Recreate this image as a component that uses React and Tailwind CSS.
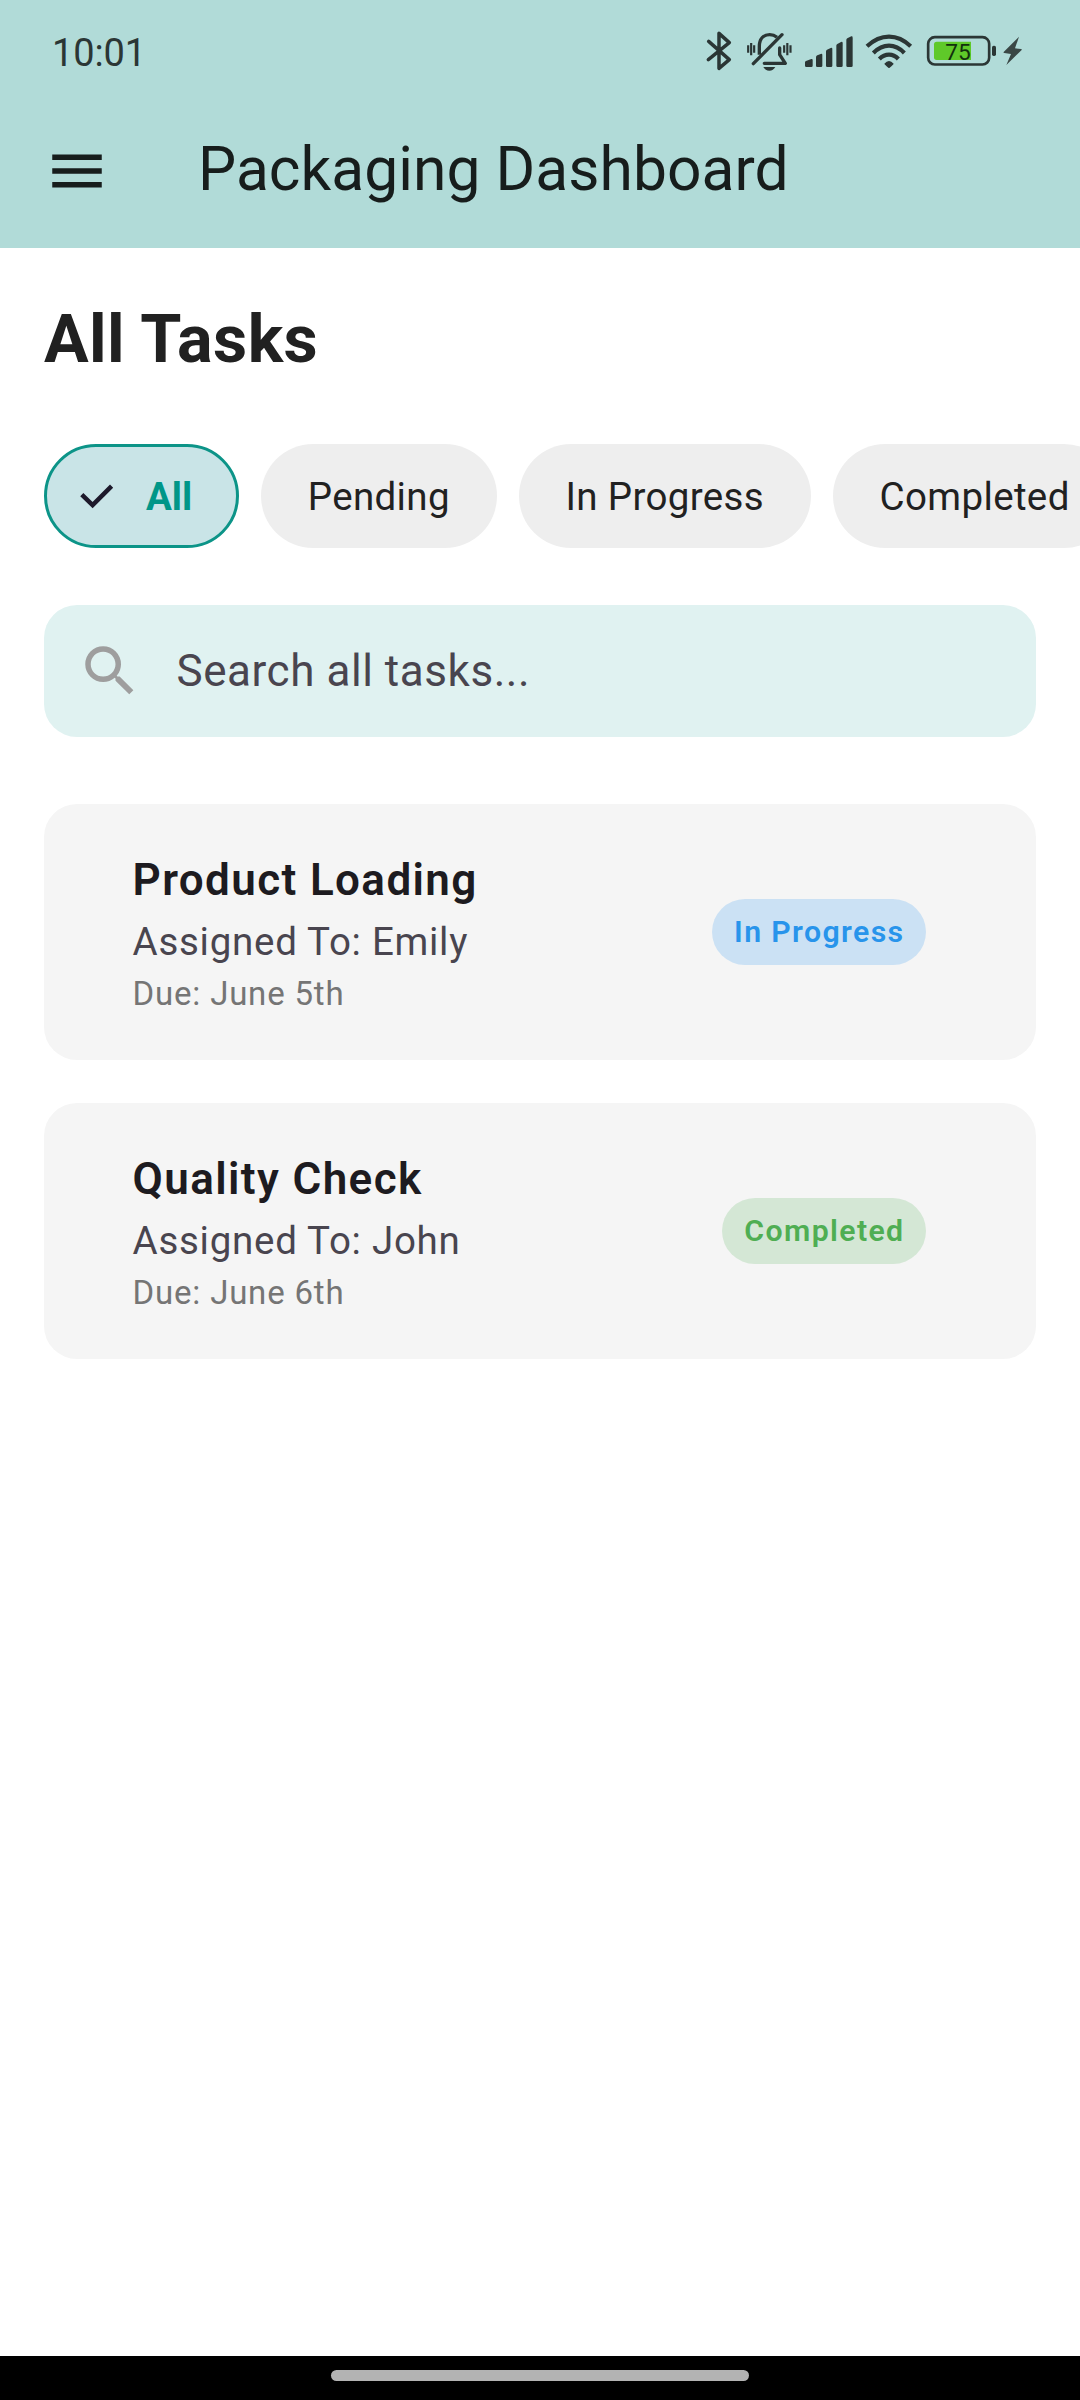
import { MdMenu, MdSearch } from "react-icons/md";

const INK = "#2b3635";

function BluetoothIcon() {
  return (
    <svg viewBox="0 0 140 195" className="h-[65px] w-[46.667px]" fill="none" stroke={INK} strokeWidth="10.500" strokeLinejoin="round" strokeLinecap="round">
      <path d="M56 64 L118 119 L87 145 V40 L118 68 L55 119" />
    </svg>
  );
}

function SilentIcon() {
  return (
    <svg viewBox="140 0 190 195" className="h-[65px] w-[63.333px]" fill="none" stroke={INK} strokeLinecap="round" strokeLinejoin="round">
      <path strokeWidth="10" d="M189 131 L275 44" />
      <path strokeWidth="10" strokeLinecap="butt" d="M207 104 V80 C207 56 220 44 238 44 C246 44 254 47 260 52" />
      <path strokeWidth="10" d="M268 84 V104 L285 130 H222" />
      <path strokeWidth="6.500" strokeLinecap="butt" d="M173.500 76V98 M182.500 69V106 M191.500 76V98 M281.500 76V98 M291 69V106 M300.500 76V98" />
      <path fill={INK} stroke="none" d="M219 141 H255 C251 148 245 152 237 152 C229 152 223 148 219 141 Z" />
    </svg>
  );
}

function SignalIcon() {
  return (
    <svg viewBox="330 0 180 195" className="h-[65px] w-[60px]" fill={INK}>
      <path d="M345 127 Q345 124 348 123 L364 117 Q368 116 368 120 V137 Q368 141 364 141 H349 Q345 141 345 137Z" />
      <path d="M378 112 Q378 108 382 106 L392 102 Q397 100 397 105 V137 Q397 141 393 141 H382 Q378 141 378 137Z" />
      <path d="M408 94 Q408 91 411 89 L422 84 Q427 82 427 87 V137 Q427 141 423 141 H412 Q408 141 408 137Z" />
      <path d="M439 77 Q439 74 442 72 L453 66 Q458 64 458 69 V137 Q458 141 454 141 H443 Q439 141 439 137Z" />
      <path d="M469 60 Q469 57 472 55 L484 49 Q488 48 488 53 V137 Q488 141 484 141 H473 Q469 141 469 137Z" />
    </svg>
  );
}

function WifiIcon() {
  return (
    <svg viewBox="510 0 180 195" className="h-[65px] w-[60px]" fill="none" stroke={INK} strokeWidth="12.500">
      <path d="M531 79 Q562 50 597 50 Q632 50 662 79" />
      <path d="M550 99 Q572 77 597 77 Q622 77 643 99" />
      <path d="M568 117 Q581 104 597 104 Q613 104 625 117" />
      <path fill={INK} stroke="none" d="M583 131 Q590 123 597 123 Q604 123 611 131 Q611 133 599 143 Q597 145 595 143 Q583 133 583 131Z" />
    </svg>
  );
}

function BatteryIcon() {
  return (
    <svg viewBox="690 0 240 195" className="h-[65px] w-[80px]">
      <rect x="714.500" y="51.500" width="183" height="82" rx="20" fill="none" stroke={INK} strokeWidth="8" />
      <path d="M740 65 H843 V120 H740 Q732 120 732 112 V73 Q732 65 740 65Z" fill="#5fc929" />
      <rect x="906" y="77" width="12" height="31" rx="5" fill={INK} />
      <text x="804" y="120" textAnchor="middle" fontFamily="Roboto, sans-serif" fontWeight="450" fontSize="68" fill="#12300e">75</text>
    </svg>
  );
}

function BoltIcon() {
  return (
    <svg viewBox="930 0 120 195" className="h-[65px] w-[40px]" fill="#3a4745">
      <path d="M987 50 L941 96 Q940 99 943 99 L963 102 L949 135 L995 90 Q997 87 993 87 L975 85Z" />
    </svg>
  );
}

function StatusBar() {
  return (
    <div className="flex h-[94px] items-start justify-between pt-5 pr-10 pl-[52px]">
      <span className="mt-[5px] text-[38px] leading-[56px] font-[450] tracking-[-0.1px] text-[#2b3635]">10:01</span>
      <div className="flex">
        <BluetoothIcon />
        <SilentIcon />
        <SignalIcon />
        <WifiIcon />
        <BatteryIcon />
        <BoltIcon />
      </div>
    </div>
  );
}

function AppBar() {
  return (
    <div className="flex h-[154px] items-center pl-11">
      <MdMenu className="size-[66px] shrink-0 text-[#171d1c]" />
      <h1 className="ml-[88px] pb-[3px] text-[60.500px] leading-[76px] tracking-[0.050px] text-[#171d1c]">Packaging Dashboard</h1>
    </div>
  );
}

function Chip({ label, selected }) {
  if (selected) {
    return (
      <button className="flex h-full w-[195px] shrink-0 items-center rounded-full border-[3px] border-[#0c9488] bg-[#c9e4e7] pl-[33px]">
        <svg viewBox="0 0 34 26" className="h-[26px] w-[34px]" fill="none" stroke="#1d192b" strokeWidth="4.500">
          <path d="M1.800 11.700 L12.600 22.100 L31.600 3.200" />
        </svg>
        <span className="ml-[32px] pt-px text-[38.500px] leading-[55px] font-bold text-[#009688]">{label}</span>
      </button>
    );
  }
  return (
    <button className="flex h-full shrink-0 items-center rounded-full bg-[#eeeeee] px-[46.750px]">
      <span className="pt-px text-[38.500px] leading-[55px] tracking-[0.360px] text-[#212121]">{label}</span>
    </button>
  );
}

function SearchField() {
  return (
    <div className="mx-11 mt-[57px] flex h-[132px] items-center rounded-[33px] bg-[#e0f2f1] pl-[33px]">
      <MdSearch className="size-[66px] shrink-0 text-[#9e9e9e]" />
      <span className="ml-[33.500px] text-[44px] leading-[66px] tracking-[0.550px] text-[#49454f]">Search all tasks...</span>
    </div>
  );
}

function TaskCard({ title, assignee, due, status, badgeClass }) {
  return (
    <article className="flex h-[255.750px] items-center justify-between rounded-[33px] bg-[#f5f5f5] pr-[110px] pl-[88.600px]">
      <div>
        <h3 className="text-[44px] leading-[66px] font-semibold tracking-[1.375px] text-[#1d1b20]">{title}</h3>
        <p className="text-[38.500px] leading-[57px] tracking-[0.720px] text-[#49454f]">Assigned To: {assignee}</p>
        <p className="pt-px text-[33px] leading-[46px] tracking-[0.800px] text-[#757575]">Due: {due}</p>
      </div>
      <span className={badgeClass + " flex h-[66px] items-center rounded-[33px] pt-px pr-[21.500px] pl-[22.500px] text-[30.250px] leading-[44px] font-semibold tracking-[1.375px]"}>{status}</span>
    </article>
  );
}

export default function App() {
  return (
    <div className="flex h-[2400px] w-[1080px] flex-col overflow-hidden bg-white font-[Roboto,sans-serif]">
      <header className="h-[248px] shrink-0 bg-[#b1dbd8]">
        <StatusBar />
        <AppBar />
      </header>
      <main className="flex-1">
        <h2 className="mt-[46px] pl-11 text-[66.500px] leading-[90px] font-bold tracking-[0.420px] text-[#212121]">All Tasks</h2>
        <div className="mt-[59.500px] ml-11 flex h-[104.500px] gap-[22px] overflow-hidden">
          <Chip label="All" selected />
          <Chip label="Pending" />
          <Chip label="In Progress" />
          <Chip label="Completed" />
        </div>
        <SearchField />
        <section className="mx-11 mt-[67px] flex flex-col gap-[43.250px]">
          <TaskCard title="Product Loading" assignee="Emily" due="June 5th" status="In Progress" badgeClass="bg-[#cbe1f4] text-[#2894eb]" />
          <TaskCard title="Quality Check" assignee="John" due="June 6th" status="Completed" badgeClass="bg-[#d4e7d5] text-[#4fae53]" />
        </section>
      </main>
      <footer className="flex h-11 shrink-0 justify-center bg-black pt-3.5">
        <div className="h-[11px] w-[418px] rounded-full bg-[#b3b3b3]" />
      </footer>
    </div>
  );
}
